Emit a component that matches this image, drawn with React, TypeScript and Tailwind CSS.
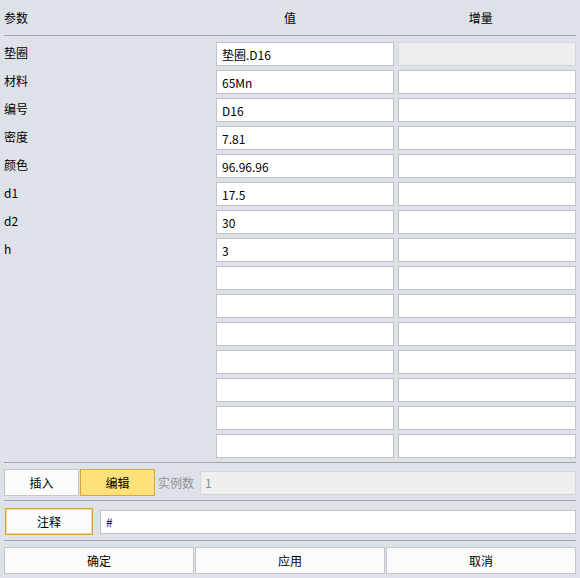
import React from "react";

const rows: [string, string][] = [
  ["垫圈", "垫圈.D16"],
  ["材料", "65Mn"],
  ["编号", "D16"],
  ["密度", "7.81"],
  ["颜色", "96.96.96"],
  ["d1", "17.5"],
  ["d2", "30"],
  ["h", "3"],
  ["", ""],
  ["", ""],
  ["", ""],
  ["", ""],
  ["", ""],
  ["", ""],
  ["", ""],
];

function Field({ value, disabled }: { value: string; disabled?: boolean }) {
  return (
    <div
      className={
        disabled
          ? "w-[178px] h-[24px] border border-[#d2d5d9] bg-[#efefef] flex items-center pl-[5px] pt-[1px]"
          : "w-[178px] h-[24px] border border-[#bfc2c7] bg-white flex items-center pl-[5px] pt-[1px]"
      }
    >
      {value}
    </div>
  );
}

export default function App() {
  return (
    <div
      className="w-[580px] h-[578px] bg-[#dde1e8] px-[4px] text-[12px] text-black leading-none"
      style={{ fontFamily: '"Noto Sans CJK SC", "Noto Sans", sans-serif' }}
    >
      <div className="h-[35px] grid grid-cols-3 items-center">
        <div className="text-left">参数</div>
        <div className="text-center">值</div>
        <div className="text-center">增量</div>
      </div>
      <div className="h-px bg-[#a3a5a8]" />
      <div className="pt-[6px] flex flex-col gap-[4px]">
        {rows.map(([label, value], i) => (
          <div key={i} className="flex items-center h-[24px]">
            <div className="w-[212px] mb-[3px]">{label}</div>
            <Field value={value} />
            <div className="w-[4px]" />
            <Field value="" disabled={i === 0} />
          </div>
        ))}
      </div>
      <div className="mt-[4px] h-px bg-[#a3a5a8]" />
      <div className="mt-[6px] h-[27px] flex items-center">
        <div className="w-[75px] h-[27px] border border-[#c3c6ca] bg-[#fbfbfb] flex items-center justify-center">
          插入
        </div>
        <div className="ml-[1px] w-[75px] h-[27px] border border-[#d4a540] bg-[#ffe17a] flex items-center justify-center">
          编辑
        </div>
        <div className="ml-[3px] w-[42px] text-[#909396]">实例数</div>
        <div className="flex-1 h-[24px] border border-[#d2d5d9] bg-[#efefef] flex items-center pl-[4px] text-[#8c8f92]">
          1
        </div>
      </div>
      <div className="mt-[4px] h-px bg-[#a3a5a8]" />
      <div className="mt-[7px] h-[27px] flex items-center">
        <div className="ml-[1px] w-[88px] h-[27px] border border-[#d6a23c] shadow-[inset_0_0_0_1px_#f5d98a] bg-[#fcfcfc] flex items-center justify-center">
          注释
        </div>
        <div className="ml-[7px] flex-1 h-[24px] border border-[#bfc2c7] bg-white flex items-center pl-[5px]">
          #
        </div>
      </div>
      <div className="mt-[5px] h-px bg-[#a3a5a8]" />
      <div className="mt-[6px] grid grid-cols-3 gap-[1px] h-[27px]">
        <div className="border border-[#c3c6ca] bg-[#fbfbfb] flex items-center justify-center">确定</div>
        <div className="border border-[#c3c6ca] bg-[#fbfbfb] flex items-center justify-center">应用</div>
        <div className="border border-[#c3c6ca] bg-[#fbfbfb] flex items-center justify-center">取消</div>
      </div>
    </div>
  );
}
